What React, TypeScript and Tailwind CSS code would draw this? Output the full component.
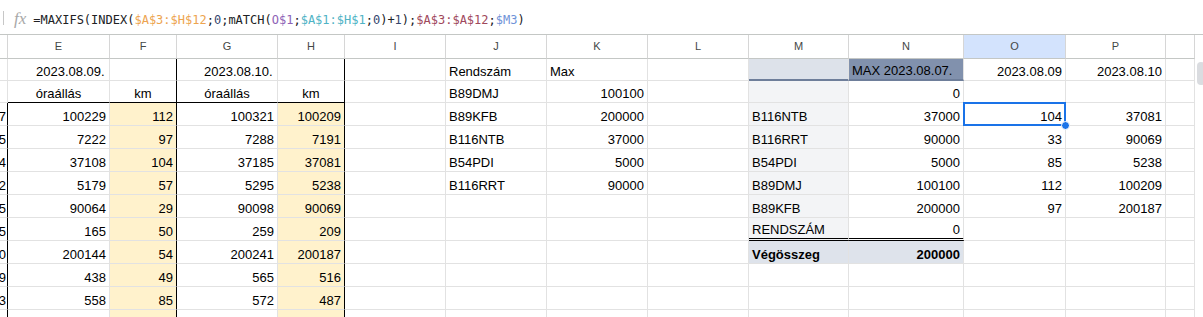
import React from 'react';

const cols = ['D', 'E', 'F', 'G', 'H', 'I', 'J', 'K', 'L', 'M', 'N', 'O', 'P', 'Q'];

const data: Record<number, Record<string, string>> = {
  1: { E: '2023.08.09.', G: '2023.08.10.', J: 'Rendszám', K: 'Max', N: 'MAX 2023.08.07.', O: '2023.08.09', P: '2023.08.10' },
  2: { E: 'óraállás', F: 'km', G: 'óraállás', H: 'km', J: 'B89DMJ', K: '100100', N: '0' },
  3: { D: '7', E: '100229', F: '112', G: '100321', H: '100209', J: 'B89KFB', K: '200000', M: 'B116NTB', N: '37000', O: '104', P: '37081' },
  4: { D: '5', E: '7222', F: '97', G: '7288', H: '7191', J: 'B116NTB', K: '37000', M: 'B116RRT', N: '90000', O: '33', P: '90069' },
  5: { D: '4', E: '37108', F: '104', G: '37185', H: '37081', J: 'B54PDI', K: '5000', M: 'B54PDI', N: '5000', O: '85', P: '5238' },
  6: { D: '2', E: '5179', F: '57', G: '5295', H: '5238', J: 'B116RRT', K: '90000', M: 'B89DMJ', N: '100100', O: '112', P: '100209' },
  7: { D: '5', E: '90064', F: '29', G: '90098', H: '90069', M: 'B89KFB', N: '200000', O: '97', P: '200187' },
  8: { D: '5', E: '165', F: '50', G: '259', H: '209', M: 'RENDSZÁM', N: '0' },
  9: { D: '0', E: '200144', F: '54', G: '200241', H: '200187', M: 'Végösszeg', N: '200000' },
  10: { D: '9', E: '438', F: '49', G: '565', H: '516' },
  11: { D: '3', E: '558', F: '85', G: '572', H: '487' },
  12: {},
};

const rows = [1, 2, 3, 4, 5, 6, 7, 8, 9, 10, 11, 12];

function cellClass(r: number, c: string, text: string) {
  const selected = r === 3 && c === 'O';
  const cls = [
    'relative flex items-end pb-[1px] px-[3px] whitespace-nowrap text-[13px] leading-[15px] text-black',
    selected ? 'z-10 overflow-visible' : 'overflow-hidden',
  ];

  const blackRight = ((c === 'F' || c === 'H') && r >= 1) || (c === 'D' && r >= 3);
  cls.push(blackRight ? 'border-r border-r-black' : 'border-r border-r-[#e2e2e2]');

  if (r === 2 && ['E', 'F', 'G', 'H'].includes(c)) cls.push('border-b border-b-black');
  else if (r === 1 && (c === 'M' || c === 'N')) cls.push('border-b-2 border-b-[#6e7e9a]');
  else if (r === 8 && (c === 'M' || c === 'N')) cls.push('border-b-[3px] border-double border-b-black');
  else cls.push('border-b border-b-[#e2e2e2]');

  if ((c === 'F' || c === 'H') && r >= 3) cls.push('bg-[#fff2cc]');
  if (c === 'M' && r === 1) cls.push('bg-[#dde2ea]');
  if (c === 'N' && r === 1) cls.push('bg-[#8191ad] text-[#eef1f6]');
  if (c === 'M' && r >= 2 && r <= 8) cls.push('bg-[#f3f4f6]');
  if ((c === 'M' || c === 'N') && r === 9) cls.push('bg-[#dee3eb] font-bold');

  if (r === 2 && ['E', 'F', 'G', 'H'].includes(c)) cls.push('justify-center');
  else if (r === 1 && c === 'E') cls.push('pl-[28px]');
  else if (r === 1 && c === 'G') cls.push('pl-[27px]');
  else if (/^\d+$/.test(text) || (r === 1 && (c === 'O' || c === 'P'))) cls.push('justify-end');
  if (c === 'D') cls.push('justify-end pr-[1px] pl-0');

  return cls.join(' ');
}

function Formula() {
  return (
    <div className="flex h-[35px] items-center border-b border-[#c4c7c5] bg-white">
      <div className="ml-[3px] mt-[2px] h-[14px] w-px bg-[#c7c7c7]" />
      <span className="ml-[10px] mt-[4px] font-['Liberation_Serif',serif] text-[17px] italic text-[#a8a8a8]">fx</span>
      <div className="ml-[7px] mt-[5px] font-['DejaVu_Sans_Mono',monospace] text-[12px] text-[#202124]">
        =MAXIFS(INDEX(<span className="text-[#eda44f]">$A$3:$H$12</span>;<span className="text-[#34466e]">0</span>;mATCH(
        <span className="text-[#8e62b6]">O$1</span>;<span className="text-[#4eb3c5]">$A$1:$H$1</span>;
        <span className="text-[#34466e]">0</span>)+<span className="text-[#34466e]">1</span>);
        <span className="text-[#a0485c]">$A$3:$A$12</span>;<span className="text-[#6f93d8]">$M3</span>)
      </div>
    </div>
  );
}

export default function App() {
  return (
    <div className="h-[317px] w-[1203px] overflow-hidden bg-white font-['Liberation_Sans',Arial,sans-serif]">
      <Formula />
      <div className="flex">
        <div className="grid w-[1195px] grid-cols-[8px_102px_67px_101px_67px_101px_101px_101px_101px_100px_115px_102px_100px_29px] grid-rows-[24px_22px_22px_repeat(10,23px)]">
          {cols.map((c) => (
            <div
              key={'h' + c}
              className={`flex items-center justify-center border-b border-r border-b-[#c4c7c5] border-r-[#d6d6d6] text-[11px] text-[#444746] ${
                c === 'O' ? 'bg-[#d3e3fd] text-[#1f1f1f]' : 'bg-white'
              }`}
            >
              {c === 'D' || c === 'Q' ? '' : c}
            </div>
          ))}
          {rows.map((r) =>
            cols.map((c) => {
              const text = data[r][c] ?? '';
              return (
                <div key={r + c} className={cellClass(r, c, text)}>
                  {text}
                  {r === 3 && c === 'O' && (
                    <>
                      <div className="pointer-events-none absolute inset-[-1px] border-2 border-[#1a73e8]" />
                      <div className="absolute bottom-[-5px] right-[-5px] h-[9px] w-[9px] rounded-full border border-white bg-[#1a73e8]" />
                    </>
                  )}
                </div>
              );
            })
          )}
        </div>
        <div className="relative w-[8px]">
          <div className="ml-[2px] mt-[27px] h-[23px] w-[8px] rounded-full bg-[#dadce0]" />
        </div>
      </div>
    </div>
  );
}
